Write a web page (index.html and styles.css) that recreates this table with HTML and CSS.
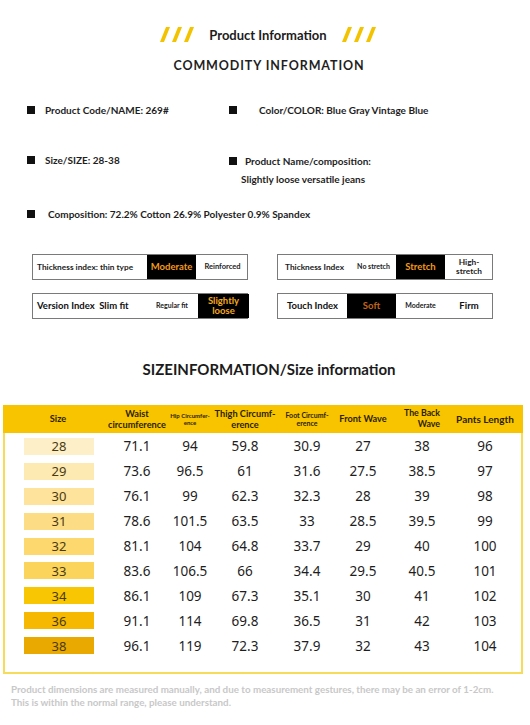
FILE: index.html
```html
<!DOCTYPE html>
<html lang="en">
<head>
    <meta charset="UTF-8">
    <meta name="viewport" content="width=device-width, initial-scale=1.0">
    <title>Product Information</title>
    <link rel="stylesheet" href="styles.css">
</head>
<body>
    <div class="page">
        <div class="top-title">
            <svg class="stripes" width="34" height="15" viewBox="0 0 34 15">
                <polygon points="6,0 10,0 4,15 0,15" />
                <polygon points="18,0 22,0 16,15 12,15" />
                <polygon points="30,0 34,0 28,15 24,15" />
            </svg>
            <span class="top-title__text">Product Information</span>
            <svg class="stripes" width="34" height="15" viewBox="0 0 34 15">
                <polygon points="6,0 10,0 4,15 0,15" />
                <polygon points="18,0 22,0 16,15 12,15" />
                <polygon points="30,0 34,0 28,15 24,15" />
            </svg>
        </div>
        <div class="sub-title">COMMODITY INFORMATION</div>

        <div class="info">
            <div class="info__row">
                <div class="info__item"><span class="bullet"></span><span>Product Code/NAME: 269#</span></div>
                <div class="info__item info__item--right"><span class="bullet"></span><span class="info__color">Color/COLOR: Blue Gray Vintage Blue</span></div>
            </div>
            <div class="info__row info__row--second">
                <div class="info__item"><span class="bullet"></span><span>Size/SIZE: 28-38</span></div>
                <div class="info__item info__item--right info__item--stack">
                    <div class="info__line"><span class="bullet bullet--name"></span><span>Product Name/composition:</span></div>
                    <div class="info__sub">Slightly loose versatile jeans</div>
                </div>
            </div>
            <div class="info__item info__item--comp"><span class="bullet"></span><span>Composition: 72.2% Cotton 26.9% Polyester 0.9% Spandex</span></div>
        </div>

        <div class="indexes">
            <div class="index-box">
                <div class="seg seg--label seg--left" style="width: 114px">Thickness index: thin type</div>
                <div class="seg seg--on" style="width: 49px">Moderate</div>
                <div class="seg seg--small" style="width: 53px">Reinforced</div>
            </div>
            <div class="index-box">
                <div class="seg seg--label" style="width: 73px">Thickness Index</div>
                <div class="seg seg--tiny" style="width: 45px">No stretch</div>
                <div class="seg seg--on" style="width: 49px">Stretch</div>
                <div class="seg seg--mid" style="width: 48px">High-<br>stretch</div>
            </div>
            <div class="index-box">
                <div class="seg seg--big seg--left" style="width: 113px">Version Index&nbsp; Slim fit</div>
                <div class="seg seg--tiny" style="width: 52px">Regular fit</div>
                <div class="seg seg--on seg--lines" style="width: 51px">Slightly<br>loose</div>
            </div>
            <div class="index-box">
                <div class="seg seg--big" style="width: 69px">Touch Index</div>
                <div class="seg seg--on seg--soft" style="width: 49px">Soft</div>
                <div class="seg seg--tiny" style="width: 49px">Moderate</div>
                <div class="seg seg--big" style="width: 48px">Firm</div>
            </div>
        </div>

        <h2 class="size-title">SIZEINFORMATION/Size information</h2>

        <div class="size-table">
            <div class="size-table__head">
                <div class="cell head-cell">Size</div>
                <div class="cell head-cell">Waist<br>circumference</div>
                <div class="cell head-cell head-cell--xs">Hip Circumfer-<br>ence</div>
                <div class="cell head-cell">Thigh Circumf-<br>erence</div>
                <div class="cell head-cell head-cell--s">Foot Circumf-<br>erence</div>
                <div class="cell head-cell">Front Wave</div>
                <div class="cell head-cell"><span class="head-back">The Back<br>Wave</span></div>
                <div class="cell head-cell head-cell--l">Pants Length</div>
            </div>
            <div class="size-table__body" id="rows"></div>
        </div>

        <p class="note">Product dimensions are measured manually, and due to measurement gestures, there may be an error of 1-2cm.<br>This is within the normal range, please understand.</p>
    </div>

    <script>
        document.addEventListener('DOMContentLoaded', function() {
            const rows = [
                ['28', '71.1', '94', '59.8', '30.9', '27', '38', '96', '#fdf0c8'],
                ['29', '73.6', '96.5', '61', '31.6', '27.5', '38.5', '97', '#fde9b2'],
                ['30', '76.1', '99', '62.3', '32.3', '28', '39', '98', '#fde39c'],
                ['31', '78.6', '101.5', '63.5', '33', '28.5', '39.5', '99', '#fcdd86'],
                ['32', '81.1', '104', '64.8', '33.7', '29', '40', '100', '#fcd86f'],
                ['33', '83.6', '106.5', '66', '34.4', '29.5', '40.5', '101', '#fbd45c'],
                ['34', '86.1', '109', '67.3', '35.1', '30', '41', '102', '#f9c604'],
                ['36', '91.1', '114', '69.8', '36.5', '31', '42', '103', '#f6b800'],
                ['38', '96.1', '119', '72.3', '37.9', '32', '43', '104', '#e9a900']
            ];
            let body = document.getElementById('rows');
            rows.forEach(function(r) {
                let row = document.createElement('div');
                row.className = 'size-row';
                let html = '<div class="cell"><span class="swatch" style="background-color: ' + r[8] + '">' + r[0] + '</span></div>';
                for (let i = 1; i < 8; i++) {
                    html += '<div class="cell num">' + r[i] + '</div>';
                }
                row.innerHTML = html;
                body.appendChild(row);
            });
        });
    </script>
</body>
</html>
```

FILE: styles.css
```css
body{
    margin: 0;
    background-color: #ffffff;
    font-family: Lato, "Noto Sans", sans-serif;
    color: #1a1a1a;
}
.page{
    width: 530px;
    padding-top: 27px;
}
.top-title{
    display: flex;
    justify-content: center;
    align-items: center;
    gap: 15px;
    padding-left: 6px;
    height: 15px;
}
.stripes polygon{
    fill: #f3c300;
}
.top-title__text{
    font-weight: bold;
    font-size: 13px;
    color: #1c1c1c;
}
.sub-title{
    margin-top: 16px;
    text-align: center;
    font-weight: bold;
    font-size: 12.5px;
    letter-spacing: 0.9px;
    padding-left: 8px;
    color: #1f1f1f;
}
.info{
    margin-top: 30px;
    padding-left: 27px;
    font-size: 10px;
    font-weight: bold;
    color: #1e1e1e;
}
.info__row{
    display: flex;
    height: 14px;
    align-items: center;
}
.info__row--second{
    margin-top: 37px;
    height: auto;
    align-items: flex-start;
}
.info__item{
    display: flex;
    align-items: center;
    width: 202px;
}
.info__item--right{
    width: auto;
}
.info__item--stack{
    display: block;
}
.info__line{
    display: flex;
    align-items: center;
    height: 14px;
}
.bullet{
    display: inline-block;
    width: 8px;
    height: 8px;
    background-color: #111;
    margin-right: 10px;
}
.bullet--name{
    margin-right: 8px;
}
.info__color{
    padding-left: 12px;
}
.info__sub{
    margin-top: 5px;
    padding-left: 12px;
}
.info__item--comp{
    margin-top: 23px;
    width: auto;
}
.info__item--comp .bullet{
    margin-right: 13px;
}
.indexes{
    margin-top: 34px;
    padding-left: 32px;
    display: grid;
    grid-template-columns: 216px 216px;
    column-gap: 29px;
    row-gap: 13px;
}
.index-box{
    display: flex;
    border: 1px solid #7a7a7a;
    height: 24px;
}
.seg{
    display: flex;
    justify-content: center;
    align-items: center;
    text-align: center;
    font-weight: bold;
    line-height: 1.05;
    flex-shrink: 0;
}
.seg--label{
    font-size: 8.3px;
    color: #222;
}
.seg--big{
    font-size: 9.5px;
    color: #111;
}
.seg--left{
    justify-content: flex-start;
    padding-left: 4px;
    box-sizing: border-box;
}
.seg--small{
    font-size: 7.5px;
    color: #222;
}
.seg--tiny{
    font-size: 7px;
    color: #222;
}
.seg--mid{
    font-size: 8.3px;
    color: #222;
}
.seg--on{
    background-color: #000;
    color: #f39a1c;
    font-size: 9.5px;
}
.seg--lines{
    color: #f5a81e;
}
.seg--soft{
    color: #c2651c;
}
.size-title{
    margin: 40px 0 0 0;
    text-align: center;
    font-size: 15px;
    font-weight: bold;
    color: #1b1b1b;
    padding-left: 8px;
    line-height: 20px;
}
.size-table{
    margin: 26px 0 0 3px;
    width: 520px;
    height: 269px;
    box-sizing: border-box;
    border: 2px solid #f6dc58;
    border-top: none;
}
.size-table__head{
    display: grid;
    grid-template-columns: 106px 52px 54px 56px 68px 44px 74px 52px;
    background-color: #f8c400;
    height: 28px;
    padding-left: 2px;
    margin: 0 -2px;
    align-items: center;
}
.cell{
    display: flex;
    justify-content: center;
    align-items: center;
    white-space: nowrap;
    text-align: center;
}
.head-cell{
    font-size: 9.2px;
    font-weight: bold;
    line-height: 1.2;
    color: #2c2200;
}
.head-cell--xs{
    font-size: 6px;
}
.head-cell--s{
    font-size: 7px;
}
.head-back{
    display: block;
    text-align: right;
    font-size: 8.8px;
}
.head-cell--l{
    font-size: 10px;
}
.size-table__body{
    padding-top: 1px;
}
.size-row{
    display: grid;
    grid-template-columns: 106px 52px 54px 56px 68px 44px 74px 52px;
    height: 24.9px;
    align-items: center;
}
.swatch{
    display: flex;
    justify-content: center;
    align-items: center;
    width: 70px;
    height: 17px;
    margin-left: 2px;
    font-family: "Noto Sans", sans-serif;
    font-size: 13px;
    color: #4a3a10;
}
.num{
    font-family: "Noto Sans", sans-serif;
    font-size: 13.5px;
    color: #1e1e1e;
}
.note{
    margin: 9px 0 0 11px;
    font-size: 9.8px;
    line-height: 13px;
    color: #c8c8c8;
    font-weight: bold;
    white-space: nowrap;
}
```
